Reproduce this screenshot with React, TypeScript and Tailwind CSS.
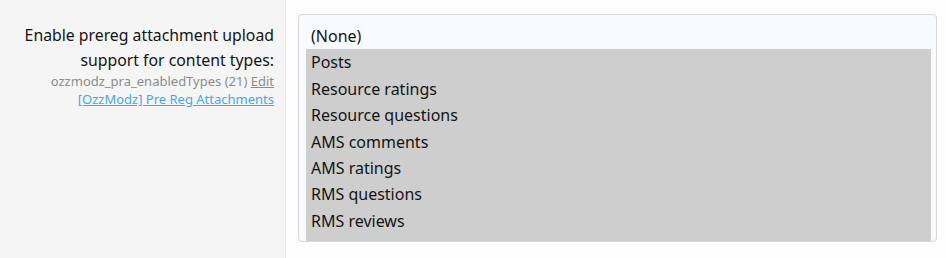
import React from "react";

const options = [
  "Posts",
  "Resource ratings",
  "Resource questions",
  "AMS comments",
  "AMS ratings",
  "RMS questions",
  "RMS reviews",
];

export default function App() {
  return (
    <div
      className="flex w-[946px] h-[258px] bg-[#fefefe] overflow-hidden"
      style={{ fontFamily: '"Noto Sans", "Open Sans", sans-serif' }}
    >
      <div className="w-[286px] shrink-0 bg-[#f5f5f5] border-r border-[#e5e5e5] pr-[11px] pt-[23px] text-right">
        <div className="text-[15.8px] leading-[25px] text-[#141414]">
          Enable prereg attachment upload
          <br />
          support for content types:
        </div>
        <div className="-mt-[1px] text-[13px] leading-[18px] text-[#8c8c8c]">
          ozzmodz_pra_enabledTypes (21){" "}
          <a className="underline text-[#8c8c8c]">Edit</a>
          <br />
          <a className="underline text-[#47a7eb]">[OzzModz] Pre Reg Attachments</a>
        </div>
      </div>
      <div className="flex-1 pl-[12px] pr-[9px] pt-[14px]">
        <div className="h-[228px] rounded-[4px] border border-[#d8d8d8] bg-[#f7fbff] pl-[7px] pr-[5px] pt-[8px] overflow-hidden text-[16px] text-[#141414]">
          <div className="h-[26.4px] leading-[26.4px] pl-[5px]">(None)</div>
          {options.map((o) => (
            <div key={o} className="h-[26.4px] leading-[26.4px] pl-[5px] bg-[#cecece]">
              {o}
            </div>
          ))}
          <div className="h-[26.4px] bg-[#cecece]" />
        </div>
      </div>
    </div>
  );
}
